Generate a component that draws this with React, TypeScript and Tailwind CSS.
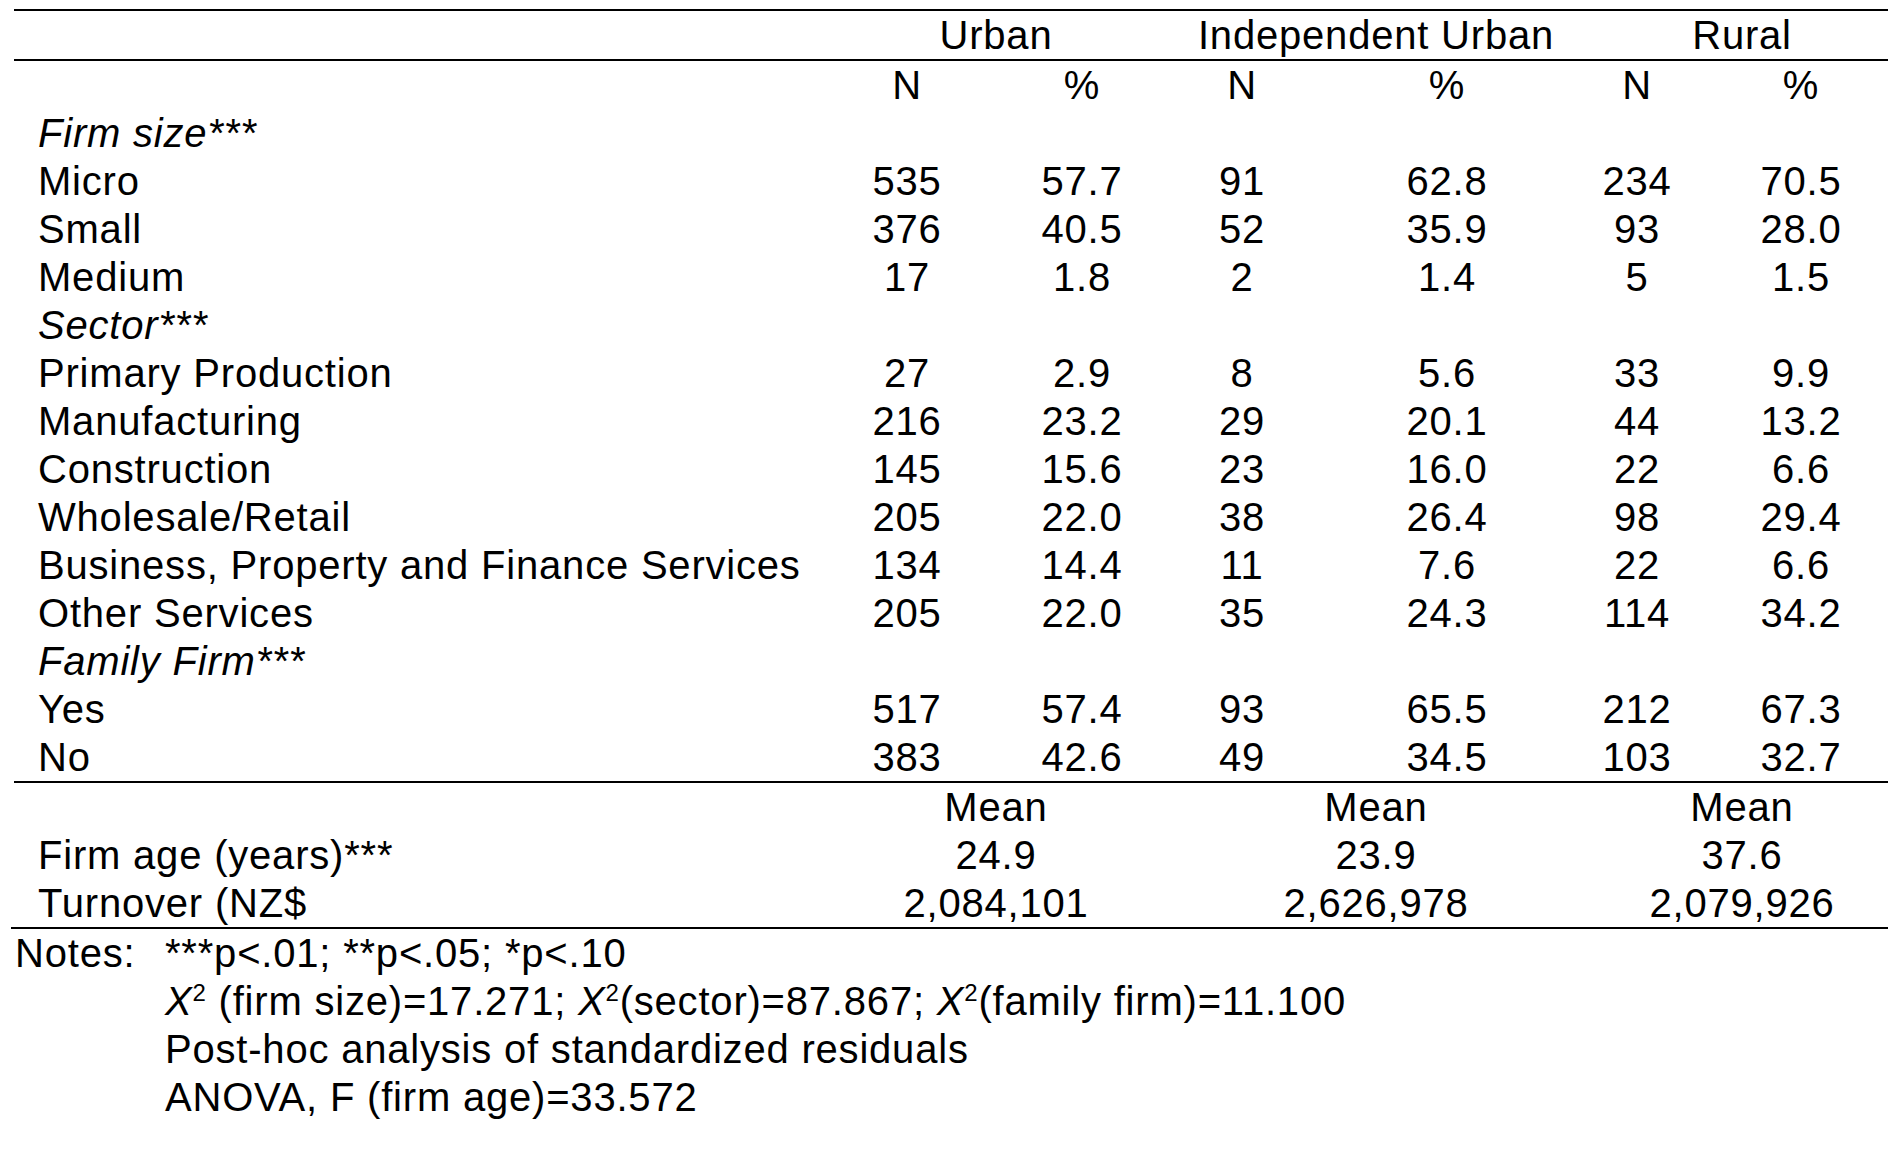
import React from "react";

type Row = { label: string; italic?: boolean; v?: string[] };

const rows: Row[] = [
  { label: "", v: ["N", "%", "N", "%", "N", "%"] },
  { label: "Firm size***", italic: true },
  { label: "Micro", v: ["535", "57.7", "91", "62.8", "234", "70.5"] },
  { label: "Small", v: ["376", "40.5", "52", "35.9", "93", "28.0"] },
  { label: "Medium", v: ["17", "1.8", "2", "1.4", "5", "1.5"] },
  { label: "Sector***", italic: true },
  { label: "Primary Production", v: ["27", "2.9", "8", "5.6", "33", "9.9"] },
  { label: "Manufacturing", v: ["216", "23.2", "29", "20.1", "44", "13.2"] },
  { label: "Construction", v: ["145", "15.6", "23", "16.0", "22", "6.6"] },
  { label: "Wholesale/Retail", v: ["205", "22.0", "38", "26.4", "98", "29.4"] },
  { label: "Business, Property and Finance Services", v: ["134", "14.4", "11", "7.6", "22", "6.6"] },
  { label: "Other Services", v: ["205", "22.0", "35", "24.3", "114", "34.2"] },
  { label: "Family Firm***", italic: true },
  { label: "Yes", v: ["517", "57.4", "93", "65.5", "212", "67.3"] },
  { label: "No", v: ["383", "42.6", "49", "34.5", "103", "32.7"] },
];

const means: { label: string; v: string[] }[] = [
  { label: "", v: ["Mean", "Mean", "Mean"] },
  { label: "Firm age (years)***", v: ["24.9", "23.9", "37.6"] },
  { label: "Turnover (NZ$", v: ["2,084,101", "2,626,978", "2,079,926"] },
];

function Chi() {
  return (
    <>
      <i>X</i>
      <sup className="text-[24px] -top-[14px]">2</sup>
    </>
  );
}

export default function App() {
  return (
    <div className="min-h-screen w-full overflow-hidden bg-white text-black font-['Liberation_Sans',Arial,sans-serif] text-[40px] leading-[40px] tracking-[0.02em]">
      <div className="pt-[9px]">
        {/* group header */}
        <div className="ml-[14px] border-t-2 border-black">
          <div className="grid h-[48px] grid-cols-[822px_320px_440px_1fr] items-center">
            <div />
            <div className="text-center">Urban</div>
            <div className="text-center">Independent Urban</div>
            <div className="text-center">Rural</div>
          </div>
        </div>
        {/* body */}
        <div className="ml-[14px] border-y-2 border-black">
          {rows.map((r, i) => (
            <div
              key={i}
              className="grid h-[48px] grid-cols-[776px_234px_116px_204px_206px_174px_154px] items-center whitespace-nowrap"
            >
              <div className={"pl-[24px] " + (r.italic ? "italic" : "")}>{r.label}</div>
              {(r.v ?? ["", "", "", "", "", ""]).map((x, j) => (
                <div key={j} className="text-center">
                  {x}
                </div>
              ))}
            </div>
          ))}
        </div>
        {/* means */}
        <div className="ml-[11px] border-b-2 border-black pl-[3px]">
          {means.map((m, i) => (
            <div
              key={i}
              className="grid h-[48px] grid-cols-[822px_320px_440px_1fr] items-center whitespace-nowrap"
            >
              <div className="pl-[24px]">{m.label}</div>
              {m.v.map((x, j) => (
                <div key={j} className="text-center">
                  {x}
                </div>
              ))}
            </div>
          ))}
        </div>
        {/* notes */}
        <div className="grid grid-cols-[150px_1fr] pl-[15px] whitespace-nowrap">
          <div className="flex h-[48px] items-center">Notes:</div>
          <div className="flex flex-col">
            <div className="flex h-[48px] items-center">
              <span>
                ***p&lt;.01; **p&lt;.05; *p&lt;.10
              </span>
            </div>
            <div className="flex h-[48px] items-center">
              <span>
                <Chi /> (firm size)=17.271; <Chi />(sector)=87.867; <Chi />(family firm)=11.100
              </span>
            </div>
            <div className="flex h-[48px] items-center">Post-hoc analysis of standardized residuals</div>
            <div className="flex h-[48px] items-center">ANOVA, F (firm age)=33.572</div>
          </div>
        </div>
      </div>
    </div>
  );
}
